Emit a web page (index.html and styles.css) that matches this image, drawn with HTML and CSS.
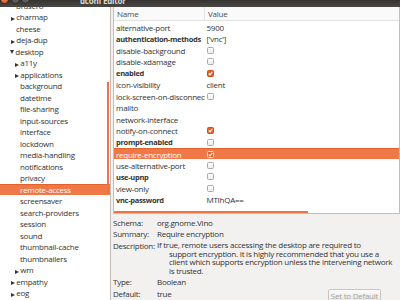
FILE: index.html
```html
<!DOCTYPE html>
<html lang="en">
<head>
    <meta charset="UTF-8">
    <meta name="viewport" content="width=device-width, initial-scale=1.0">
    <title>dconf Editor</title>
    <link rel="stylesheet" href="styles.css">
</head>
<body>
    <div class="window">
        <!-- 标题栏 -->
        <div class="titlebar">
            <div class="win-btns">
                <span class="btn-close"></span>
                <span class="btn-min"></span>
                <span class="btn-max"></span>
            </div>
            <div class="title">dconf Editor</div>
        </div>
        <div class="main">
            <!-- 左边的树 -->
            <div class="tree">
                <ul class="tree-list">
                    <li class="lv1">brasero</li>
                    <li class="lv1 closed">charmap</li>
                    <li class="lv1">cheese</li>
                    <li class="lv1 closed">deja-dup</li>
                    <li class="lv1 open">desktop</li>
                    <li class="lv2 closed">a11y</li>
                    <li class="lv2 closed">applications</li>
                    <li class="lv2">background</li>
                    <li class="lv2">datetime</li>
                    <li class="lv2">file-sharing</li>
                    <li class="lv2">input-sources</li>
                    <li class="lv2">interface</li>
                    <li class="lv2">lockdown</li>
                    <li class="lv2">media-handling</li>
                    <li class="lv2">notifications</li>
                    <li class="lv2">privacy</li>
                    <li class="lv2 active">remote-access</li>
                    <li class="lv2">screensaver</li>
                    <li class="lv2">search-providers</li>
                    <li class="lv2">session</li>
                    <li class="lv2">sound</li>
                    <li class="lv2">thumbnail-cache</li>
                    <li class="lv2">thumbnailers</li>
                    <li class="lv2 closed">wm</li>
                    <li class="lv1 closed">empathy</li>
                    <li class="lv1 closed">eog</li>
                </ul>
                <div class="tree-scroll"></div>
            </div>
            <div class="right">
                <!-- 键列表 -->
                <div class="keys">
                    <div class="keys-head">
                        <span class="col-name">Name</span>
                        <span class="col-value">Value</span>
                    </div>
                    <ul class="key-list">
                        <li><span class="col-name">alternative-port</span><span class="col-value">5900</span></li>
                        <li class="bold"><span class="col-name">authentication-methods</span><span class="col-value">['vnc']</span></li>
                        <li><span class="col-name">disable-background</span><span class="col-value"><span class="check"></span></span></li>
                        <li><span class="col-name">disable-xdamage</span><span class="col-value"><span class="check"></span></span></li>
                        <li class="bold"><span class="col-name">enabled</span><span class="col-value"><span class="check on"><svg width="5" height="5" viewBox="0 0 5 5"><path d="M0.7 2.5 L2 3.8 L4.3 0.9" fill="none" stroke="#fff" stroke-width="1.1"/></svg></span></span></li>
                        <li><span class="col-name">icon-visibility</span><span class="col-value">client</span></li>
                        <li><span class="col-name">lock-screen-on-disconnect</span><span class="col-value"><span class="check"></span></span></li>
                        <li><span class="col-name">mailto</span><span class="col-value"></span></li>
                        <li><span class="col-name">network-interface</span><span class="col-value"></span></li>
                        <li><span class="col-name">notify-on-connect</span><span class="col-value"><span class="check on"><svg width="5" height="5" viewBox="0 0 5 5"><path d="M0.7 2.5 L2 3.8 L4.3 0.9" fill="none" stroke="#fff" stroke-width="1.1"/></svg></span></span></li>
                        <li class="bold"><span class="col-name">prompt-enabled</span><span class="col-value"><span class="check"></span></span></li>
                        <li class="active"><span class="col-name">require-encryption</span><span class="col-value"><span class="check on"><svg width="5" height="5" viewBox="0 0 5 5"><path d="M0.7 2.5 L2 3.8 L4.3 0.9" fill="none" stroke="#fff" stroke-width="1.1"/></svg></span></span></li>
                        <li><span class="col-name">use-alternative-port</span><span class="col-value"><span class="check"></span></span></li>
                        <li class="bold"><span class="col-name">use-upnp</span><span class="col-value"><span class="check"></span></span></li>
                        <li><span class="col-name">view-only</span><span class="col-value"><span class="check"></span></span></li>
                        <li class="bold"><span class="col-name">vnc-password</span><span class="col-value">MTIhQA==</span></li>
                    </ul>
                    <div class="h-scroll"></div>
                </div>
                <!-- 详细信息 -->
                <div class="details">
                    <div class="detail-row">
                        <span class="detail-label">Schema:</span>
                        <span>org.gnome.Vino</span>
                    </div>
                    <div class="detail-row">
                        <span class="detail-label">Summary:</span>
                        <span>Require encryption</span>
                    </div>
                    <div class="detail-row">
                        <span class="detail-label">Description:</span>
                        <span class="detail-desc">If true, remote users accessing the desktop are required to<br>support encryption. It is highly recommended that you use a<br>client which supports encryption unless the intervening network<br>is trusted.</span>
                    </div>
                    <div class="detail-row">
                        <span class="detail-label">Type:</span>
                        <span>Boolean</span>
                    </div>
                    <div class="detail-row">
                        <span class="detail-label">Default:</span>
                        <span>true</span>
                        <div class="btn-default">Set to Default</div>
                    </div>
                </div>
            </div>
        </div>
    </div>
</body>
</html>
```

FILE: styles.css
```css
*{
    padding: 0;
    margin: 0;
    box-sizing: border-box;
}
ul,li{
    list-style: none;
}
body{
    width: 400px;
    height: 300px;
    overflow: hidden;
    font-family: "Open Sans", "DejaVu Sans", sans-serif;
    font-size: 8px;
    letter-spacing: -0.25px;
    color: #333;
    background: #f2f1f0;
}
.titlebar{
    height: 7px;
    overflow: hidden;
    display: flex;
    background: linear-gradient(#353430, #4a4844);
}
.win-btns{
    display: flex;
    gap: 1.5px;
    margin-top: -5.5px;
}
.win-btns span{
    width: 9px;
    height: 9px;
    border-radius: 50%;
    background: linear-gradient(#77756f, #55534e);
    border: 1px solid #2e2d2a;
}
.win-btns .btn-close{
    background: linear-gradient(#f6915f, #e8612c);
    border-color: #3b2a20;
}
.title{
    margin-left: 50px;
    margin-top: -5px;
    line-height: 11.5px;
    font-weight: bold;
    color: #dfdbd2;
}
.main{
    display: flex;
    height: 293px;
}
.tree{
    width: 111px;
    flex-shrink: 0;
    background: #fff;
    border-right: 1px solid #c3beb7;
    overflow: hidden;
    position: relative;
}
.tree-list{
    margin-top: -7.25px;
}
.tree-list li{
    height: 11.5px;
    line-height: 11.5px;
    white-space: nowrap;
}
.tree-list .lv1{
    padding-left: 16px;
}
.tree-list .lv2{
    padding-left: 20px;
}
.tree-list .closed::before{
    content: "";
    display: inline-block;
    border-left: 4px solid #333;
    border-top: 2.5px solid transparent;
    border-bottom: 2.5px solid transparent;
    margin-left: -5px;
    margin-right: 1.25px;
    vertical-align: -0.5px;
}
.tree-list .open::before{
    content: "";
    display: inline-block;
    border-top: 4px solid #333;
    border-left: 2.5px solid transparent;
    border-right: 2.5px solid transparent;
    margin-left: -6px;
    margin-right: 1.25px;
    vertical-align: 0.5px;
}
.tree-list .active{
    background: #f07746;
    border-top: 1px solid #e2622b;
    line-height: 10.5px;
    color: #fff;
}
.tree-scroll{
    position: absolute;
    top: 75px;
    right: 1px;
    width: 2px;
    height: 113px;
    background: #ec7641;
}
.right{
    flex: 1;
    padding-left: 2px;
    display: flex;
    flex-direction: column;
}
.keys{
    height: 207px;
    flex-shrink: 0;
    background: #fff;
    border: 1px solid #c3beb7;
    border-top: none;
    position: relative;
    overflow: hidden;
}
.keys-head{
    display: flex;
    height: 14.25px;
    line-height: 13.25px;
    background: #fafafa;
    border-bottom: 1px solid #e2e2e2;
    color: #4a4a4a;
}
.keys-head .col-name{
    width: 91px;
    padding-left: 3px;
    border-right: 1px solid #e6e6e6;
}
.keys-head .col-value{
    padding-left: 3px;
}
.key-list li{
    display: flex;
    align-items: center;
    height: 11.5px;
    white-space: nowrap;
}
.key-list .col-name{
    width: 91px;
    flex-shrink: 0;
    padding-left: 2px;
    overflow: hidden;
}
.key-list .col-value{
    display: flex;
    align-items: center;
    padding-left: 1.5px;
}
.key-list .bold .col-name{
    font-size: 7.5px;
    font-weight: bold;
    letter-spacing: -0.3px;
}
.key-list .active{
    background: #f07746;
    border-top: 1px solid #e2622b;
    color: #fff;
}
.check{
    display: inline-block;
    width: 7px;
    height: 7px;
    border: 1px solid #a9a9a9;
    border-radius: 1.5px;
    background: linear-gradient(#fff, #ececec);
}
.check svg{
    display: block;
}
.check.on{
    background: #e3602c;
    border-color: #c4511f;
}
.active .check.on{
    border-color: #fbe1d5;
}
.h-scroll{
    position: absolute;
    left: 0;
    bottom: 0;
    width: 194px;
    height: 2px;
    background: #ec7641;
}
.details{
    padding-top: 2.75px;
}
.detail-row{
    display: flex;
    line-height: 11.5px;
    white-space: nowrap;
}
.detail-label{
    width: 44px;
    flex-shrink: 0;
}
.detail-desc{
    line-height: 8.4px;
    padding: 1.55px 0 1.55px 12px;
    text-indent: -12px;
}
.btn-default{
    margin-left: auto;
    margin-right: 19px;
    margin-top: 1.25px;
    width: 53px;
    height: 14px;
    line-height: 12px;
    text-align: center;
    color: #a19e99;
    border: 1px solid #c9c5bf;
    border-radius: 2px;
    background: linear-gradient(#fafaf9, #ebe9e6);
}
```
